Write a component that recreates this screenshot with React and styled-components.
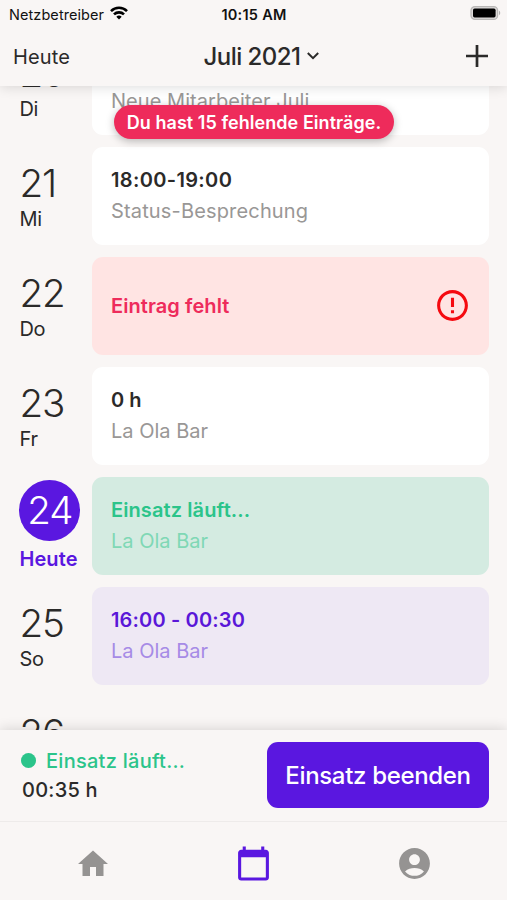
import React from 'react'
import styled, { createGlobalStyle } from 'styled-components'
import { MdErrorOutline, MdHome, MdCalendarToday, MdAccountCircle } from 'react-icons/md'

const GlobalStyle = createGlobalStyle`
  * { box-sizing: border-box; }

  body {
    margin: 0;
    background: #f9f6f5;
    font-family: Inter, 'Liberation Sans', sans-serif;
    color: #2b2a29;
  }
`

const Screen = styled.div`
  display: flex;
  flex-direction: column;
  height: 900px;
  overflow: hidden;
  background: #f9f6f5;
`

const Top = styled.header`
  position: relative;
  z-index: 2;
  flex: none;
  height: 86px;
  background: #f9f6f5;
  box-shadow: 0 1px 12px rgba(0, 0, 0, 0.14);
`

const StatusBar = styled.div`
  display: grid;
  grid-template-columns: 1fr auto 1fr;
  align-items: center;
  height: 28px;
  padding: 0 6px 0 9px;
  color: #111;
  font-size: 14.5px;
`

const Carrier = styled.span`
  display: flex;
  align-items: center;
  gap: 6px;
  letter-spacing: 0.07px;

  svg { margin-bottom: 2px; }
`

const Clock = styled.span`
  margin-right: 2px;
  font-size: 14.5px;
  font-weight: 600;
  letter-spacing: 0.25px;
`

const Battery = styled.svg`
  justify-self: end;
  margin-bottom: 2px;
`

const NavBar = styled.div`
  display: grid;
  grid-template-columns: 1fr auto 1fr;
  align-items: center;
  height: 58px;
  padding: 0 19px 2px 13px;
  font-size: 20px;
`

const TodayLink = styled.span`
  padding-top: 1px;
  letter-spacing: 0.15px;
`

const Month = styled.span`
  display: flex;
  align-items: center;
  gap: 7px;
  margin-left: 22px;
  font-size: 24px;
  font-weight: 500;
  letter-spacing: -0.55px;
`

const Plus = styled.svg`
  justify-self: end;
`

const List = styled.main`
  position: relative;
  flex: 1;
  min-height: 0;
  overflow: hidden;
`

const Days = styled.div`
  display: flex;
  flex-direction: column;
  gap: 12px;
  margin-top: -49px;
`

const Row = styled.div`
  display: flex;
  flex: none;
  height: 98px;
  padding-right: 18.5px;
`

const Day = styled.div`
  flex: none;
  width: 92.4px;
  padding: ${p => (p.$today ? '2.5px 0 0 19.4px' : '6px 0 0 19.4px')};
`

const DayNumber = styled.div`
  width: 61px;
  height: ${p => (p.$today ? '61px' : '54px')};
  line-height: 61px;
  border-radius: 50%;
  background: ${p => (p.$today ? '#5a17e0' : 'transparent')};
  color: ${p => (p.$today ? '#fff' : 'inherit')};
  text-align: ${p => (p.$today ? 'center' : 'left')};
  font-size: 38.5px;
  font-weight: 300;
  letter-spacing: -1.1px;
`

const Weekday = styled.div`
  margin-top: ${p => (p.$today ? '6px' : '0')};
  line-height: 25px;
  font-size: 20px;
  font-weight: ${p => (p.$today ? 600 : 400)};
  letter-spacing: ${p => (p.$today ? '0.1px' : '-0.2px')};
  color: ${p => (p.$today ? '#5a17e0' : 'inherit')};
`

const tones = {
  plain: { background: '#fff', title: '#2b2a29', sub: '#999796' },
  missing: { background: '#ffe4e3', title: '#ee2b5b' },
  running: { background: '#d4ebe1', title: '#2bc48a', sub: '#7fd8b5' },
  planned: { background: '#eee8f4', title: '#5a17d8', sub: '#a68be6' }
}

const Card = styled.div`
  display: flex;
  align-items: center;
  justify-content: space-between;
  flex: 1;
  padding: 0 18px 0 18.6px;
  border-radius: 11px;
  background: ${p => tones[p.$tone].background};
  color: ${p => tones[p.$tone].title};
`

const Title = styled.div`
  line-height: 31px;
  font-size: 20px;
  font-weight: 600;
  letter-spacing: ${p => p.$spacing}px;
`

const Subtitle = styled.div`
  line-height: 31px;
  font-size: 20px;
  letter-spacing: ${p => p.$spacing}px;
  color: ${p => tones[p.$tone].sub};
`

const MissingIcon = styled(MdErrorOutline)`
  margin-bottom: 2px;
  color: #f50a10;
`

const Toast = styled.div`
  position: absolute;
  z-index: 1;
  top: 19px;
  left: 114px;
  width: 280px;
  height: 34px;
  border-radius: 17px;
  background: #ee2b5b;
  box-shadow: 0 2px 9px rgba(0, 0, 0, 0.28);
  color: #fff;
  line-height: 35px;
  text-align: center;
  white-space: nowrap;
  font-size: 18px;
  font-weight: 600;
  letter-spacing: 0.05px;
`

const Bottom = styled.footer`
  position: relative;
  z-index: 2;
  flex: none;
  height: 170px;
  background: #f9f6f5;
  box-shadow: 0 -1px 12px rgba(0, 0, 0, 0.14);
`

const ActiveShift = styled.div`
  display: flex;
  justify-content: space-between;
  height: 92px;
  padding: 12px 18px 0 21px;
  border-bottom: 1px solid #eeebea;
`

const ShiftStatus = styled.div`
  display: flex;
  align-items: center;
  gap: 10px;
  height: 37px;
  color: #2bc48a;
  font-size: 20px;
  font-weight: 500;
  letter-spacing: 0.27px;
`

const Dot = styled.span`
  width: 15px;
  height: 15px;
  border-radius: 50%;
  background: #2bc48a;
`

const Duration = styled.div`
  margin-left: 1px;
  line-height: 22px;
  font-size: 20px;
  font-weight: 500;
  letter-spacing: 0.25px;
`

const StopButton = styled.button`
  width: 222px;
  height: 66px;
  padding: 0;
  border: 0;
  border-radius: 11px;
  background: #5a17e0;
  color: #fff;
  font-family: inherit;
  font-size: 24px;
  font-weight: 500;
  letter-spacing: -0.33px;
  white-space: nowrap;
`

const Tabs = styled.nav`
  display: flex;
  justify-content: center;
  height: 78px;
`

const Tab = styled.span`
  display: flex;
  align-items: center;
  justify-content: center;
  width: 160.5px;
  padding-top: 5px;
  color: ${p => (p.$active ? '#5a17e0' : '#959392')};
`

const days = [
  { day: 20, weekday: 'Di', tone: 'plain', title: '09:00-10:00', sub: 'Neue Mitarbeiter Juli', subSpacing: 0.05 },
  { day: 21, weekday: 'Mi', tone: 'plain', title: '18:00-19:00', sub: 'Status-Besprechung', spacing: 0.35, subSpacing: 0.16 },
  { day: 22, weekday: 'Do', tone: 'missing', title: 'Eintrag fehlt', spacing: 0.08 },
  { day: 23, weekday: 'Fr', tone: 'plain', title: '0 h', sub: 'La Ola Bar' },
  { day: 24, weekday: 'Heute', tone: 'running', title: 'Einsatz läuft...', sub: 'La Ola Bar', spacing: 0.1, today: true },
  { day: 25, weekday: 'So', tone: 'planned', title: '16:00 - 00:30', sub: 'La Ola Bar', spacing: 0.15 },
  { day: 26, weekday: 'Mo' }
]

const DayRow = ({ day, weekday, tone, title, sub, today, spacing = 0, subSpacing = 0 }) => (
  <Row>
    <Day $today={today}>
      <DayNumber $today={today}>{day}</DayNumber>
      <Weekday $today={today}>{weekday}</Weekday>
    </Day>

    {tone && (
      <Card $tone={tone}>
        <div>
          <Title $spacing={spacing}>{title}</Title>
          {sub && <Subtitle $tone={tone} $spacing={subSpacing}>{sub}</Subtitle>}
        </div>
        {tone === 'missing' && <MissingIcon size={37} />}
      </Card>
    )}
  </Row>
)

const App = () => (
  <Screen>
    <GlobalStyle />

    <Top>
      <StatusBar>
        <Carrier>
          Netzbetreiber
          <svg width='18' height='14' viewBox='0 0 18 14' fill='none' stroke='#000' strokeWidth='2.6'>
            <path d='M1 5.1a11.4 11.4 0 0 1 16 0' />
            <path d='M4 8.4a7.1 7.1 0 0 1 10 0' />
            <path d='M9 13.6l-2.7-2.8a3.9 3.9 0 0 1 5.4 0z' fill='#000' stroke='none' />
          </svg>
        </Carrier>
        <Clock>10:15 AM</Clock>
        <Battery width='31' height='16' viewBox='0 0 31 16'>
          <rect x='1' y='1.6' width='26.6' height='12.8' rx='4' fill='#dedbda' stroke='#b9b7b6' strokeWidth='1.3' />
          <rect x='3' y='3.6' width='22.6' height='8.8' rx='1.6' fill='#000' />
          <path d='M29 5.8c1.6.6 1.6 3.8 0 4.4z' fill='#b3b1b0' />
        </Battery>
      </StatusBar>

      <NavBar>
        <TodayLink>Heute</TodayLink>
        <Month>
          Juli 2021
          <svg width='12' height='8' viewBox='0 0 12 8' fill='none' stroke='#2b2a29' strokeWidth='2'>
            <path d='M.8 1L6 6.2 11.2 1' />
          </svg>
        </Month>
        <Plus width='22' height='22' viewBox='0 0 22 22' stroke='#2b2a29' strokeWidth='2.7'>
          <path d='M11 0v22M0 11h22' />
        </Plus>
      </NavBar>
    </Top>

    <List>
      <Days>
        {days.map(d => <DayRow key={d.day} {...d} />)}
      </Days>
      <Toast>Du hast 15 fehlende Einträge.</Toast>
    </List>

    <Bottom>
      <ActiveShift>
        <div>
          <ShiftStatus><Dot />Einsatz läuft...</ShiftStatus>
          <Duration>00:35 h</Duration>
        </div>
        <StopButton>Einsatz beenden</StopButton>
      </ActiveShift>

      <Tabs>
        <Tab><MdHome size={36} /></Tab>
        <Tab $active><MdCalendarToday size={37} /></Tab>
        <Tab><MdAccountCircle size={37} /></Tab>
      </Tabs>
    </Bottom>
  </Screen>
)

export default App
